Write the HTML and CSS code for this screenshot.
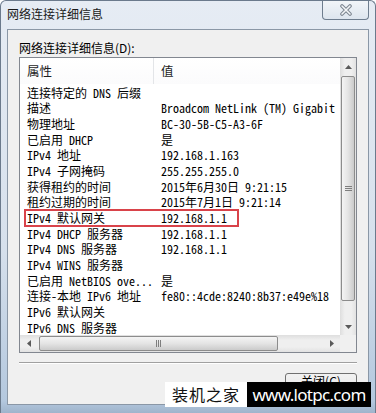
FILE: index.html
```html
<!DOCTYPE html>
<html lang="zh-CN">
<head>
  <meta charset="UTF-8">
  <meta name="viewport" content="width=device-width, initial-scale=1.0">
  <title>网络连接详细信息</title>
  <link rel="stylesheet" href="styles.css">
</head>
<body>
  <div class="window">
    <div class="titlebar">
      <span class="title">网络连接详细信息</span>
      <button class="close-btn" aria-label="关闭">
        <svg width="14" height="12" viewBox="0 0 14 12">
          <path d="M3 2 L11 10 M11 2 L3 10" stroke="#7c8590" stroke-width="3.6" stroke-linecap="round" fill="none"/>
          <path d="M3 2 L11 10 M11 2 L3 10" stroke="#f4f6f8" stroke-width="1.6" stroke-linecap="round" fill="none"/>
        </svg>
      </button>
    </div>

    <div class="client">
      <p class="label">网络连接详细信息(D):</p>

      <div class="listview">
        <div class="list-main">
          <div class="list-header">
            <div class="col">属性</div>
            <div class="col">值</div>
          </div>
          <div class="list-rows">
            <div class="row"><span>连接特定的 DNS 后缀</span><span></span></div>
            <div class="row"><span>描述</span><span>Broadcom NetLink (TM) Gigabit</span></div>
            <div class="row"><span>物理地址</span><span>BC-30-5B-C5-A3-6F</span></div>
            <div class="row"><span>已启用 DHCP</span><span>是</span></div>
            <div class="row"><span>IPv4 地址</span><span>192.168.1.163</span></div>
            <div class="row"><span>IPv4 子网掩码</span><span>255.255.255.0</span></div>
            <div class="row"><span>获得租约的时间</span><span>2015年6月30日 9:21:15</span></div>
            <div class="row"><span>租约过期的时间</span><span>2015年7月1日 9:21:14</span></div>
            <div class="row marked"><span>IPv4 默认网关</span><span>192.168.1.1</span></div>
            <div class="row"><span>IPv4 DHCP 服务器</span><span>192.168.1.1</span></div>
            <div class="row"><span>IPv4 DNS 服务器</span><span>192.168.1.1</span></div>
            <div class="row"><span>IPv4 WINS 服务器</span><span></span></div>
            <div class="row"><span>已启用 NetBIOS ove...</span><span>是</span></div>
            <div class="row"><span>连接-本地 IPv6 地址</span><span>fe80::4cde:8240:8b37:e49e%18</span></div>
            <div class="row"><span>IPv6 默认网关</span><span></span></div>
            <div class="row"><span>IPv6 DNS 服务器</span><span></span></div>
          </div>
        </div>

        <!-- vertical scrollbar -->
        <div class="vscroll">
          <div class="sb-btn">
            <svg width="7" height="4" viewBox="0 0 7 4"><polygon points="0,4 3.5,0 7,4" fill="#5a5a5a"/></svg>
          </div>
          <div class="vthumb">
            <svg width="7" height="5" viewBox="0 0 7 5">
              <path d="M0 0.5 H7 M0 2.5 H7 M0 4.5 H7" stroke="#7e7e7e" stroke-width="1"/>
            </svg>
          </div>
          <div class="sb-btn down">
            <svg width="7" height="4" viewBox="0 0 7 4"><polygon points="0,0 7,0 3.5,4" fill="#5a5a5a"/></svg>
          </div>
        </div>

        <!-- horizontal scrollbar -->
        <div class="hscroll">
          <div class="sb-btn">
            <svg width="4" height="7" viewBox="0 0 4 7"><polygon points="4,0 4,7 0,3.5" fill="#5a5a5a"/></svg>
          </div>
          <div class="hthumb">
            <svg width="5" height="7" viewBox="0 0 5 7">
              <path d="M0.5 0 V7 M2.5 0 V7 M4.5 0 V7" stroke="#7e7e7e" stroke-width="1"/>
            </svg>
          </div>
          <div class="sb-btn right">
            <svg width="4" height="7" viewBox="0 0 4 7"><polygon points="0,0 4,3.5 0,7" fill="#5a5a5a"/></svg>
          </div>
        </div>
        <div class="corner"></div>
      </div>

      <div class="separator"></div>

      <div class="buttons">
        <button class="close-dialog">关闭(C)</button>
      </div>
    </div>

    <!-- site watermark -->
    <div class="watermark">
      <span class="wm-cn">装机之家</span>
      <span class="wm-en">www.lotpc.com</span>
    </div>
  </div>
</body>
</html>
```

FILE: styles.css
```css
body {
  margin: 0;
  font-family: "Noto Sans CJK SC", sans-serif;
  font-size: 12px;
  color: #000;
  background-color: #fff;
}

.window {
  position: relative;
  width: 376px;
  height: 413px;
  box-sizing: border-box;
  border: 1px solid #6b7a8c;
  border-bottom: none;
  border-radius: 6px 6px 0 0;
  background: linear-gradient(to bottom, #e6ecf4 0, #d6e0ec 60%, #b4c8de 97%, #9fb4cc 100%);
  display: flex;
  flex-direction: column;
  overflow: hidden;
}

.titlebar {
  display: flex;
  justify-content: space-between;
  height: 28px;
  flex: none;
}

.title {
  padding-left: 6px;
  line-height: 26px;
  color: #1a1a1a;
}

.close-btn {
  align-self: flex-start;
  width: 47px;
  height: 20px;
  margin: -1px 6px 0 0;
  padding: 0;
  border: 1px solid #6e7d8e;
  border-top: none;
  border-radius: 0 0 4px 4px;
  background: linear-gradient(to bottom, #f3f6f9, #dde5ee);
  display: flex;
  align-items: center;
  justify-content: center;
}

.client {
  margin: 0 6px;
  height: 376px;
  box-sizing: border-box;
  border: 1px solid #8a97a6;
  background-color: #f0f0f0;
  padding: 10px 11px 0;
  flex: none;
}

.label {
  margin: 0;
  line-height: 16px;
}

/* List view */
.listview {
  margin-top: 1px;
  border: 1px solid #828790;
  background-color: #fff;
  display: grid;
  grid-template-columns: 320px 16px;
  grid-template-rows: 277px 17px;
}

.list-main {
  grid-column: 1;
  grid-row: 1;
  overflow: hidden;
}

.list-header {
  display: grid;
  grid-template-columns: 134px 1fr;
  height: 26px;
  background: linear-gradient(to bottom, #ffffff, #fbfbfc);
}

.list-header .col {
  line-height: 26px;
  padding-left: 7px;
  font-size: 12.5px;
  color: #1e1e1e;
}

.list-header .col:first-child {
  border-right: 1px solid #e3e5e8;
}

.list-rows {
  font-family: "Noto Sans Mono CJK SC", "Noto Sans CJK SC", monospace;
  font-size: 12px;
  padding-top: 0.5px;
}

.row {
  display: grid;
  grid-template-columns: 134px 1fr;
  height: 15.7px;
  line-height: 15.7px;
  white-space: nowrap;
}

.row span {
  padding-left: 7px;
  overflow: hidden;
}

.row.marked {
  position: relative;
}

.row.marked::after {
  content: "";
  position: absolute;
  left: 4px;
  top: -1px;
  width: 215px;
  height: 18px;
  box-sizing: border-box;
  border: 2px solid #d9434a;
}

/* Scrollbars */
.vscroll {
  grid-column: 2;
  grid-row: 1;
  display: flex;
  flex-direction: column;
  background: linear-gradient(to right, #dedede, #efefef 30%, #efefef 70%, #e2e2e2);
}

.sb-btn {
  flex: none;
  width: 17px;
  height: 17px;
  display: flex;
  align-items: center;
  justify-content: center;
}

.vscroll .sb-btn {
  width: 16px;
}

.sb-btn.down {
  margin-top: auto;
}

.sb-btn.right {
  margin-left: auto;
}

.vthumb {
  margin: 1px 1px 0;
  height: 225px;
  box-sizing: border-box;
  border: 1px solid #8c8c8c;
  border-radius: 2px;
  background: linear-gradient(to right, #f4f4f4, #e4e4e4 50%, #cbcbcb);
  display: flex;
  align-items: center;
  justify-content: center;
}

.hscroll {
  grid-column: 1;
  grid-row: 2;
  display: flex;
  background: linear-gradient(to bottom, #dedede, #efefef 30%, #efefef 70%, #e2e2e2);
}

.hthumb {
  margin: 1px 0 1px 2px;
  width: 239px;
  box-sizing: border-box;
  border: 1px solid #8c8c8c;
  border-radius: 2px;
  background: linear-gradient(to bottom, #f4f4f4, #e4e4e4 50%, #cbcbcb);
  display: flex;
  align-items: center;
  justify-content: center;
}

.corner {
  grid-column: 2;
  grid-row: 2;
  background-color: #f0f0f0;
}

.separator {
  margin-top: 9px;
  border-top: 1px solid #a0a0a0;
  border-bottom: 1px solid #ffffff;
}

.buttons {
  display: flex;
  justify-content: flex-end;
  margin-top: 9px;
}

.close-dialog {
  width: 72px;
  height: 23px;
  padding: 0 0 8px;
  border: 1px solid #707070;
  border-radius: 3px;
  background: linear-gradient(to bottom, #f2f2f2 0, #ebebeb 50%, #dddddd 50%, #cfcfcf 100%);
  font-family: "Noto Sans CJK SC", sans-serif;
  font-size: 12px;
  line-height: 12px;
  color: #000;
}

/* Watermark */
.watermark {
  position: absolute;
  left: 164px;
  top: 381px;
  display: flex;
  height: 25px;
}

.wm-cn {
  width: 82px;
  background-color: #fff;
  color: #111;
  font-size: 16px;
  letter-spacing: 1px;
  line-height: 25px;
  text-align: center;
}

.wm-en {
  width: 124px;
  background-color: #000;
  color: #fff;
  font-family: "Noto Sans", sans-serif;
  font-size: 17px;
  letter-spacing: -0.7px;
  line-height: 25px;
  text-align: center;
}
```
